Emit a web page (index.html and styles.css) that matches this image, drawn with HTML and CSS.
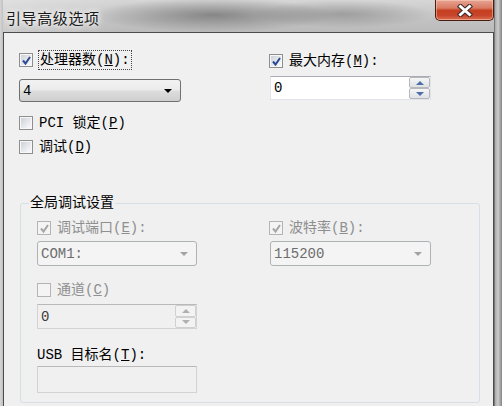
FILE: index.html
```html
<!DOCTYPE html>
<html lang="zh-CN">
<head>
  <meta charset="UTF-8">
  <meta name="viewport" content="width=device-width, initial-scale=1.0">
  <title>引导高级选项</title>
  <link rel="stylesheet" href="styles.css">
</head>
<body>
  <div class="window">
    <div class="titlebar">
      <span class="title">引导高级选项</span>
      <div class="btn-close">
        <svg width="16" height="13" viewBox="0 0 16 13">
          <path d="M3.5 2.5 L12.5 10.5 M12.5 2.5 L3.5 10.5" stroke="#3a2a2a" stroke-width="5" stroke-linecap="square" fill="none"/>
          <path d="M3.5 2.5 L12.5 10.5 M12.5 2.5 L3.5 10.5" stroke="#fff" stroke-width="3" stroke-linecap="square" fill="none"/>
        </svg>
      </div>
    </div>

    <div class="client">
      <div class="top">
        <div class="col-left">
          <label class="check">
            <span class="box checked"><svg viewBox="0 0 11 11"><path d="M2 5.5 L4.5 8.5 L9 2" stroke="#2c4a92" stroke-width="2" fill="none"/></svg></span>
            <span class="text focus">处理器数(<u>N</u>):</span>
          </label>
          <div class="combo combo-cpu">
            <span>4</span>
            <span class="arrow"></span>
          </div>
          <label class="check check-pci">
            <span class="box"></span>
            <span class="text">PCI 锁定(<u>P</u>)</span>
          </label>
          <label class="check check-debug">
            <span class="box"></span>
            <span class="text">调试(<u>D</u>)</span>
          </label>
        </div>

        <div class="col-right">
          <label class="check">
            <span class="box checked"><svg viewBox="0 0 11 11"><path d="M2 5.5 L4.5 8.5 L9 2" stroke="#2c4a92" stroke-width="2" fill="none"/></svg></span>
            <span class="text">最大内存(<u>M</u>):</span>
          </label>
          <div class="edit edit-mem">
            <span class="value">0</span>
            <div class="spin">
              <span class="sp"><span class="up"></span></span>
              <span class="sp"><span class="down"></span></span>
            </div>
          </div>
        </div>
      </div>

      <fieldset class="group">
        <legend>全局调试设置</legend>
        <div class="group-cols">
          <div class="gcol-left">
            <label class="check disabled">
              <span class="box checked"><svg viewBox="0 0 11 11"><path d="M2 5.5 L4.5 8.5 L9 2" stroke="#a6a6a6" stroke-width="2" fill="none"/></svg></span>
              <span class="text">调试端口(<u>E</u>):</span>
            </label>
            <div class="combo disabled combo-port">
              <span>COM1:</span>
              <span class="arrow"></span>
            </div>
            <label class="check disabled check-channel">
              <span class="box"></span>
              <span class="text">通道(<u>C</u>)</span>
            </label>
            <div class="edit disabled edit-channel">
              <span class="value">0</span>
              <div class="spin">
                <span class="sp"><span class="up"></span></span>
                <span class="sp"><span class="down"></span></span>
              </div>
            </div>
            <div class="field-label">USB 目标名(<u>T</u>):</div>
            <div class="edit disabled edit-usb"></div>
          </div>

          <div class="gcol-right">
            <label class="check disabled">
              <span class="box checked"><svg viewBox="0 0 11 11"><path d="M2 5.5 L4.5 8.5 L9 2" stroke="#a6a6a6" stroke-width="2" fill="none"/></svg></span>
              <span class="text">波特率(<u>B</u>):</span>
            </label>
            <div class="combo disabled combo-baud">
              <span>115200</span>
              <span class="arrow"></span>
            </div>
          </div>
        </div>
      </fieldset>
    </div>
  </div>
</body>
</html>
```

FILE: styles.css
```css
body {
  margin: 0;
  font-family: "Liberation Mono", "Noto Sans CJK SC", monospace;
  font-size: 14px;
  color: #000;
}
.window {
  width: 502px;
  height: 406px;
  box-sizing: border-box;
  padding: 0 8px 0 3px;
  display: flex;
  flex-direction: column;
  overflow: hidden;
  background:
    linear-gradient(to right, #d6d6d6 0, #c0c0c0 3px, transparent 3px, transparent 494px, #4a4a4a 494px, #a8a8a8 495px, #cdcdcd 498px, #858585 502px),
    linear-gradient(#d6d6d6, #c2c2c2 20px, #b6b6b6 40px, #bebebe);
}
.titlebar {
  height: 32px;
  flex: none;
  display: flex;
  justify-content: space-between;
  align-items: flex-start;
  background:
    radial-gradient(ellipse 120px 17px at 210px 15px, rgba(70, 70, 70, 0.5), transparent),
    radial-gradient(ellipse 90px 14px at 340px 14px, rgba(80, 80, 80, 0.35), transparent),
    linear-gradient(to right, rgba(255, 255, 255, 0.25), transparent 120px);
}
.title {
  margin: 9px 0 0 3px;
  font-family: "Noto Sans CJK SC", sans-serif;
  font-size: 15px;
  line-height: 18px;
  letter-spacing: 0.6px;
  color: #1a1a1a;
  text-shadow: 0 0 5px #fff, 0 0 9px #fff;
}
.btn-close {
  width: 59px;
  height: 21px;
  box-sizing: border-box;
  border: 1px solid #4a1c12;
  border-top: none;
  border-radius: 0 0 5px 5px;
  background: linear-gradient(#e7a595 0, #d97a63 40%, #c53f20 52%, #c7452a 78%, #dc7254 100%);
  box-shadow: inset 0 0 0 1px rgba(255, 220, 200, 0.45);
  display: flex;
  align-items: center;
  justify-content: center;
}

.client {
  flex: 1;
  background: #f0f0f0;
  border: 1px solid #4c4c4c;
  border-bottom: none;
  padding: 18px 13px 0 15px;
}
.top {
  display: flex;
}
.col-left {
  width: 250px;
  display: flex;
  flex-direction: column;
  align-items: flex-start;
}
.col-right {
  display: flex;
  flex-direction: column;
  align-items: flex-start;
  padding-top: 1px;
}

/* checkbox */
.check {
  display: flex;
  align-items: center;
  gap: 6px;
  height: 18px;
  line-height: 18px;
  white-space: nowrap;
}
.box {
  width: 14px;
  height: 14px;
  box-sizing: border-box;
  border: 1px solid #8e8f8f;
  background: linear-gradient(135deg, #c9ced6, #f4f5f7 80%);
  box-shadow: inset 0 0 0 1px #f7f7f7;
  display: flex;
  align-items: center;
  justify-content: center;
}
.box svg {
  width: 11px;
  height: 11px;
}
.focus {
  outline: 1px dotted #444;
  padding: 0 1px;
}
.check-pci { margin-top: 12px; }
.check-debug { margin-top: 6px; }
.check-channel { margin-top: 15px; }
.check.disabled .box {
  border-color: #b4b4b4;
  background: #f4f4f4;
  box-shadow: none;
}
.check.disabled .text { color: #8f8f8f; }

/* combo box */
.combo {
  box-sizing: border-box;
  border: 1px solid #707070;
  border-radius: 3px;
  background: linear-gradient(#f2f2f2 0, #ebebeb 48%, #dddddd 52%, #cfcfcf 100%);
  display: flex;
  align-items: center;
  justify-content: space-between;
  padding: 0 8px 0 3px;
}
.arrow {
  width: 0;
  height: 0;
  border-left: 4px solid transparent;
  border-right: 4px solid transparent;
  border-top: 4px solid #000;
}
.combo-cpu {
  width: 162px;
  height: 23px;
  margin-top: 10px;
}
.combo.disabled {
  border-color: #adb2b5;
  background: #f4f4f4;
  color: #6d6d6d;
}
.combo.disabled .arrow { border-top-color: #a3a3a3; }
.combo-port,
.combo-baud {
  width: 160px;
  height: 25px;
  margin-top: 4px;
}
.combo-baud { width: 161px; margin-left: 1px; }

/* edit box */
.edit {
  box-sizing: border-box;
  border: 1px solid #e0e4ea;
  border-top-color: #abadb3;
  background: #fff;
  display: flex;
  justify-content: space-between;
}
.value {
  align-self: center;
  padding-left: 3px;
}
.edit-mem {
  width: 161px;
  height: 24px;
  margin: 6px 0 0 1px;
}
.spin {
  width: 21px;
  display: flex;
  flex-direction: column;
}
.sp {
  flex: 1;
  border: 1px solid #b5b8bc;
  border-radius: 2px;
  background: linear-gradient(#f6f6f6, #dfe1e4);
  display: flex;
  align-items: center;
  justify-content: center;
}
.up,
.down {
  width: 0;
  height: 0;
  border-left: 4px solid transparent;
  border-right: 4px solid transparent;
}
.up { border-bottom: 4px solid #4d6ea8; }
.down { border-top: 4px solid #4d6ea8; }
.edit.disabled {
  border-color: #d3d3d3;
  border-top-color: #b9b9b9;
  background: #f0f0f0;
}
.edit.disabled .value { color: #3c3c3c; }
.edit.disabled .sp {
  border-color: #d0d0d0;
  background: #f3f3f3;
}
.edit.disabled .up { border-bottom-color: #b0b0b0; }
.edit.disabled .down { border-top-color: #b0b0b0; }
.edit-channel {
  width: 160px;
  height: 25px;
  margin-top: 5px;
}
.edit-usb {
  width: 160px;
  height: 27px;
  margin-top: 2px;
}
.field-label {
  height: 18px;
  line-height: 18px;
  margin-top: 17px;
  white-space: nowrap;
}

/* group box */
.group {
  width: 460px;
  box-sizing: border-box;
  margin: 38px 0 0 1px;
  padding: 7px 0 9px 16px;
  border: 1px solid #d5dfe5;
  border-radius: 3px;
  min-width: 0;
}
.group legend {
  margin-left: -8px;
  padding: 0 1px;
  line-height: 18px;
  font-size: 14px;
}
.group-cols {
  display: flex;
}
.gcol-left {
  width: 232px;
  display: flex;
  flex-direction: column;
  align-items: flex-start;
}
.gcol-right {
  display: flex;
  flex-direction: column;
  align-items: flex-start;
}
```
